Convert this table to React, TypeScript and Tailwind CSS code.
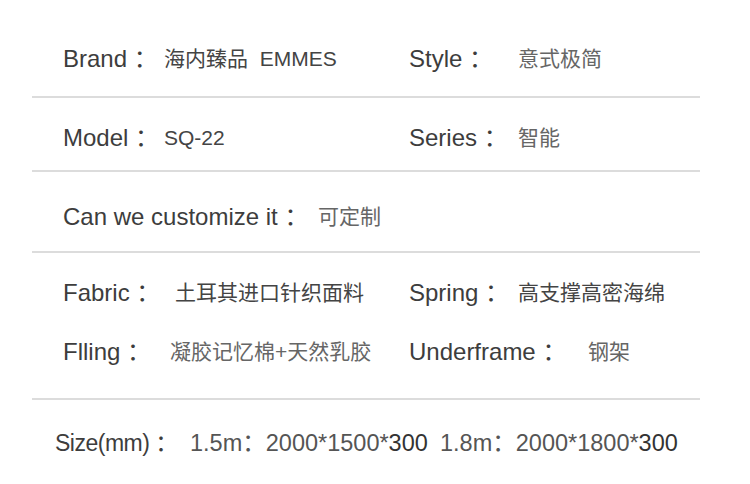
const font = { fontFamily: '"Liberation Sans", "Noto Sans CJK SC", sans-serif' };

type FieldProps = { label: string; value: React.ReactNode; labelW: string; valueClass?: string };

const Field = ({ label, value, labelW, valueClass = 'text-[#555]' }: FieldProps) => (
    <div className="flex items-center h-[30px] leading-[30px]">
        <span className={`${labelW} shrink-0 text-[24px] text-[#3d3d3d] whitespace-pre`}>{label}</span>
        <span className={`text-[21px] whitespace-pre ${valueClass}`}>{value}</span>
    </div>
);

export default function App() {
    return (
        <div className="w-[750px] h-[484px] bg-white overflow-hidden" style={font}>
            <div className="ml-[32px] w-[668px]">
                {/* Brand / Style */}
                <div className="flex pl-[31px] pt-[44px] h-[98px] border-b-2 border-[#dcdcdc]">
                    <div className="w-[346px]">
                        <Field label="Brand ：" labelW="w-[101px]" value="海内臻品  EMMES" valueClass="text-[#444]" />
                    </div>
                    <Field label="Style ：" labelW="w-[109px]" value="意式极简" valueClass="text-[#666]" />
                </div>

                {/* Model / Series */}
                <div className="flex pl-[31px] pt-[25px] h-[74px] border-b-2 border-[#dcdcdc]">
                    <div className="w-[346px]">
                        <Field label="Model ：" labelW="w-[101px]" value="SQ-22" valueClass="text-[#444]" />
                    </div>
                    <Field label="Series ：" labelW="w-[109px]" value="智能" valueClass="text-[#666]" />
                </div>

                {/* Customize */}
                <div className="flex pl-[31px] pt-[30px] h-[81px] border-b-2 border-[#dcdcdc]">
                    <Field label="Can we customize it ：" labelW="w-[255px]" value="可定制" valueClass="text-[#666]" />
                </div>

                {/* Fabric / Spring / Filling / Underframe */}
                <div className="flex flex-col gap-[29px] pl-[31px] pt-[25px] h-[147px] border-b-2 border-[#dcdcdc]">
                    <div className="flex">
                        <div className="w-[346px]">
                            <Field label="Fabric ：" labelW="w-[112px]" value="土耳其进口针织面料" valueClass="text-[#444]" />
                        </div>
                        <Field label="Spring ：" labelW="w-[109px]" value="高支撑高密海绵" valueClass="text-[#444]" />
                    </div>
                    <div className="flex">
                        <div className="w-[346px]">
                            <Field label="Flling ：" labelW="w-[107px]" value="凝胶记忆棉+天然乳胶" valueClass="text-[#666]" />
                        </div>
                        <Field label="Underframe ：" labelW="w-[179px]" value="钢架" valueClass="text-[#666]" />
                    </div>
                </div>

                {/* Size */}
                <div className="flex items-center pl-[23px] pt-[28px] h-[30px] leading-[30px] box-content">
                    <span className="w-[135px] shrink-0 text-[23px] text-[#3d3d3d] tracking-[-0.5px] whitespace-pre">Size(mm) ：</span>
                    <span className="w-[250px] shrink-0 text-[23.5px] text-[#555] whitespace-nowrap">
                        1.5m：2000*1500*<span className="text-[#333]">300</span>
                    </span>
                    <span className="text-[23.5px] text-[#555] whitespace-nowrap">
                        1.8m：2000*1800*<span className="text-[#333]">300</span>
                    </span>
                </div>
            </div>
        </div>
    );
}
